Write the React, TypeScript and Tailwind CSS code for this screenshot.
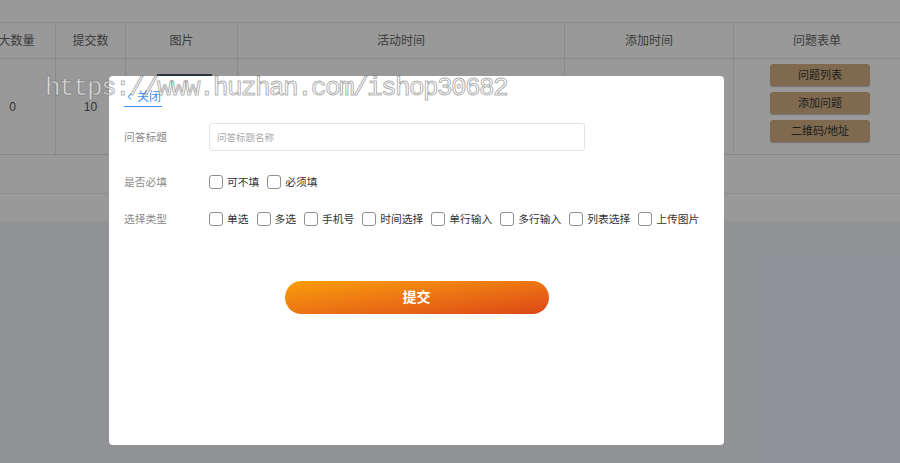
import { ChevronLeft } from 'lucide-react';

const columns = [
  { title: '最大数量', width: 'w-[90px]' },
  { title: '提交数', width: 'w-[70px]' },
  { title: '图片', width: 'w-[112px]' },
  { title: '活动时间', width: 'w-[327px]' },
  { title: '添加时间', width: 'w-[169px]' },
  { title: '问题表单', width: 'flex-1' },
];

const types = ['单选', '多选', '手机号', '时间选择', '单行输入', '多行输入', '列表选择', '上传图片'];

function CheckItem({ label }: { label: string }) {
  return (
    <label className="flex items-center">
      <span className="w-[14px] h-[14px] rounded-[3px] border border-[#8f8f8f] bg-white mr-[4px]" />
      <span className="text-[10.75px] text-[#333]">{label}</span>
    </label>
  );
}

function BackgroundTable() {
  return (
    <div className="bg-white h-[221px] pt-[22px]">
      <div className="ml-[-34px] w-[934px]">
        <div className="flex h-[37px] border-y border-[#e8e8e8]">
          {columns.map((c, i) => (
            <div
              key={c.title}
              className={`${c.width} flex items-center justify-center text-[12px] text-[#666] ${i < columns.length - 1 ? 'border-r border-[#e8e8e8]' : ''}`}
            >
              {c.title}
            </div>
          ))}
        </div>
        <div className="flex h-[96px] border-b border-[#e0e0e0]">
          <div className="w-[90px] border-r border-[#e8e8e8] flex items-center justify-center pl-[4px] text-[12px] text-[#555]">0</div>
          <div className="w-[70px] border-r border-[#e8e8e8] flex items-center justify-center text-[12px] text-[#555]">10</div>
          <div className="w-[112px] border-r border-[#e8e8e8] pt-[15px] pl-[31px]">
            <div className="w-[55px] h-[55px] bg-[#4a5a70]" />
          </div>
          <div className="w-[327px] border-r border-[#e8e8e8]" />
          <div className="w-[169px] border-r border-[#e8e8e8]" />
          <div className="flex-1 flex flex-col items-center pt-[5px] gap-[6px] pl-[6px]">
            {['问题列表', '添加问题', '二维码/地址'].map(t => (
              <button
                key={t}
                className="w-[100px] h-[22px] rounded-[3px] bg-[#d4b185] text-[11px] text-[#333] shadow-[0_1px_1px_rgba(0,0,0,0.25)]"
              >
                {t}
              </button>
            ))}
          </div>
        </div>
        <div className="h-[39px] border-b border-[#ededed]" />
      </div>
    </div>
  );
}

export default function App() {
  return (
    <div
      className="relative w-[900px] h-[463px] overflow-hidden bg-[#f2f3fb]"
      style={{ fontFamily: '"Liberation Sans", "Noto Sans CJK SC", sans-serif' }}
    >
      <BackgroundTable />

      <div className="absolute inset-0 bg-black/40" />

      <div className="absolute left-[109px] top-[76px] w-[615px] h-[369px] bg-white rounded-[4px] pl-[15px] pt-[9px]">
        <a className="inline-flex items-center text-[12px] leading-[14px] text-[#3d8ef0] border-b border-[#3d8ef0] pb-[2px] pr-[1px]">
          <ChevronLeft className="w-[11px] h-[11px] mr-[2px]" strokeWidth={2.2} />
          关闭
        </a>

        <div className="flex items-center mt-[14px] h-[28px]">
          <span className="w-[85px] text-[10.75px] text-[#8a8a8a]">问答标题</span>
          <input
            className="w-[376px] h-[28px] rounded-[3px] border border-[#e3e3e3] px-[7px] text-[9.5px] outline-none placeholder:text-[#a8a8a8]"
            placeholder="问答标题名称"
          />
        </div>

        <div className="flex items-center mt-[21px] h-[20px]">
          <span className="w-[85px] text-[10.75px] text-[#8a8a8a]">是否必填</span>
          <div className="flex items-center gap-[8px]">
            <CheckItem label="可不填" />
            <CheckItem label="必须填" />
          </div>
        </div>

        <div className="flex items-center mt-[17px] h-[20px]">
          <span className="w-[85px] text-[10.75px] text-[#8a8a8a]">选择类型</span>
          <div className="flex items-center gap-[8px]">
            {types.map(t => (
              <CheckItem key={t} label={t} />
            ))}
          </div>
        </div>

        <div className="flex justify-center mt-[52px] pr-[15px]">
          <button className="w-[264px] h-[33px] rounded-full bg-linear-to-br from-[#f99e0a] to-[#dc4516] text-white text-[14px] font-bold">
            提交
          </button>
        </div>
      </div>

      <div className="absolute left-[45px] top-[69px] text-[26px] tracking-[-1.6px] text-white/70 [-webkit-text-stroke:1px_rgba(110,110,110,0.55)] pointer-events-none"
        style={{ fontFamily: '"Liberation Mono", monospace' }}
      >
        https://www.huzhan.com/ishop30682
      </div>
    </div>
  );
}
